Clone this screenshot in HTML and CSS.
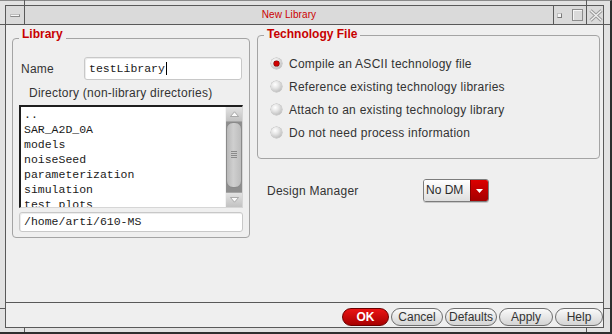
FILE: index.html
```html
<!DOCTYPE html>
<html>
<head>
<meta charset="utf-8">
<title>New Library</title>
<link rel="stylesheet" href="styles.css">
</head>
<body>
<div class="frame">
  <span class="tick tick-t1"></span>
  <span class="tick tick-t2"></span>
  <span class="tick tick-b1"></span>
  <span class="tick tick-b2"></span>
  <span class="tick tick-l1"></span>
  <span class="tick tick-l2"></span>
  <span class="tick tick-r1"></span>
  <span class="tick tick-r2"></span>
  <div class="win">
    <div class="titlebar">
      <div class="tb-menu"><span class="tb-dash"></span></div>
      <div class="tb-title">New Library</div>
      <div class="tb-ctrls">
        <span class="tb-min"></span>
        <span class="tb-max"></span>
      </div>
      <div class="tb-close">
        <svg width="14" height="13" viewBox="0 0 14 13">
          <path d="M1.5 1.5 L12.5 11.5 M12.5 1.5 L1.5 11.5" stroke="#9a9a9a" stroke-width="3.2" fill="none"/>
          <path d="M1.5 1.5 L12.5 11.5 M12.5 1.5 L1.5 11.5" stroke="#f2f2f2" stroke-width="1.2" fill="none"/>
        </svg>
      </div>
    </div>

    <div class="content">
      <div class="group lib">
        <div class="group-title">Library</div>
        <div class="name-row">
          <span class="lbl name-lbl">Name</span>
          <div class="field name-field">testLibrary<span class="caret"></span></div>
        </div>
        <div class="lbl dir-lbl">Directory (non-library directories)</div>
        <div class="listbox">
          <ul class="items">
            <li>..</li>
            <li>SAR_A2D_0A</li>
            <li>models</li>
            <li>noiseSeed</li>
            <li>parameterization</li>
            <li>simulation</li>
            <li>test_plots</li>
          </ul>
          <div class="scrollbar">
            <div class="sb-btn">
              <svg width="9" height="6" viewBox="0 0 9 6"><path d="M0.5 5.5 L4.5 0.8 L8.5 5.5 Z" fill="#fafafa" stroke="#9a9a9a" stroke-width="0.8"/></svg>
            </div>
            <div class="sb-track">
              <div class="sb-thumb"><span class="grip"></span></div>
            </div>
            <div class="sb-btn">
              <svg width="9" height="6" viewBox="0 0 9 6"><path d="M0.5 0.5 L4.5 5.2 L8.5 0.5 Z" fill="#fafafa" stroke="#9a9a9a" stroke-width="0.8"/></svg>
            </div>
          </div>
        </div>
        <div class="field path-field">/home/arti/610-MS</div>
      </div>

      <div class="right">
        <div class="group tech">
          <div class="group-title">Technology File</div>
          <div class="radios">
            <div class="radio-row"><span class="radio on"></span>Compile an ASCII technology file</div>
            <div class="radio-row"><span class="radio"></span>Reference existing technology libraries</div>
            <div class="radio-row"><span class="radio"></span>Attach to an existing technology library</div>
            <div class="radio-row"><span class="radio"></span>Do not need process information</div>
          </div>
        </div>
        <div class="dm-row">
          <span class="lbl dm-lbl">Design Manager</span>
          <div class="select">
            <span class="sel-text">No DM</span>
            <span class="sel-btn"><svg width="7" height="4" viewBox="0 0 7 4"><path d="M0 0 L7 0 L3.5 4 Z" fill="#ffffff"/></svg></span>
          </div>
        </div>
      </div>
    </div>

    <div class="buttons">
      <button class="btn ok">OK</button>
      <button class="btn w-cancel">Cancel</button>
      <button class="btn w-defaults">Defaults</button>
      <button class="btn w-apply">Apply</button>
      <button class="btn w-help">Help</button>
    </div>
  </div>
</div>
</body>
</html>
```

FILE: styles.css
```css
* { box-sizing: border-box; }

html, body {
  margin: 0;
  padding: 0;
}

body {
  width: 612px;
  height: 334px;
  overflow: hidden;
  background: #e2e2e2;
  font-family: "Liberation Sans", Arial, sans-serif;
  font-size: 12px;
  color: #333333;
}

/* outer window frame */
.frame {
  position: relative;
  width: 612px;
  height: 334px;
  background: #e2e2e2;
  border-top: 1px solid #8a8a8a;
  border-right: 2px solid #2e2e2e;
  border-bottom: 2px solid #2e2e2e;
  padding: 4px 6px 4px 5px;
}

.tick {
  position: absolute;
  background: #5a5a5a;
}
.tick-t1 { left: 24px; top: -1px; width: 1px; height: 5px; }
.tick-t2 { left: 586px; top: -1px; width: 1px; height: 5px; }
.tick-b1 { left: 24px; bottom: 0; width: 1px; height: 4px; }
.tick-b2 { left: 586px; bottom: 0; width: 1px; height: 4px; }
.tick-l1 { left: 0; top: 23px; width: 5px; height: 1px; }
.tick-l2 { left: 0; top: 307px; width: 5px; height: 1px; }
.tick-r1 { right: 0; top: 23px; width: 6px; height: 1px; }
.tick-r2 { right: 0; top: 307px; width: 6px; height: 1px; }

.win {
  height: 100%;
  display: flex;
  flex-direction: column;
  border: 1px solid #595959;
  background: #efefef;
}

/* title bar */
.titlebar {
  display: flex;
  height: 19px;
  flex: none;
  border-bottom: 1px solid #595959;
  background: #dadada;
}

.tb-menu {
  width: 19px;
  border-right: 1px solid #595959;
  display: flex;
  align-items: center;
  justify-content: center;
}

.tb-dash {
  width: 10px;
  height: 3px;
  background: #f6f6f6;
  border: 1px solid #8a8a8a;
  border-top-color: #bdbdbd;
  border-left-color: #bdbdbd;
}

.tb-title {
  flex: 1;
  text-align: center;
  color: #cc0000;
  font-size: 10px;
  letter-spacing: 0.1px;
  line-height: 18px;
}

.tb-ctrls {
  width: 34px;
  border-left: 1px solid #595959;
  border-right: 1px solid #595959;
  display: flex;
  align-items: center;
  padding-left: 3px;
}

.tb-min {
  width: 5px;
  height: 5px;
  background: #f4f4f4;
  border: 1px solid #7a7a7a;
  border-top-color: #c0c0c0;
  border-left-color: #c0c0c0;
}

.tb-max {
  width: 11px;
  height: 12px;
  margin-left: 10px;
  border: 1px solid #8c8c8c;
  box-shadow: inset 1px 1px #f6f6f6;
}

.tb-close {
  width: 16px;
  display: flex;
  align-items: center;
  padding-left: 2px;
}
.tb-close svg { display: block; }

/* main content */
.content {
  flex: 1;
  display: flex;
  align-items: flex-start;
  gap: 7px;
  padding: 0 3px 0 6px;
}

.group {
  border: 1px solid #a4a4a4;
  border-radius: 4px;
}

.group-title {
  width: max-content;
  padding: 0 3px;
  background: #efefef;
  color: #c80000;
  font-weight: bold;
  font-size: 12px;
  line-height: 14px;
}

.lbl {
  letter-spacing: 0.25px;
  line-height: 14px;
  color: #333333;
}

/* library group */
.lib {
  width: 238px;
  height: 200px;
  margin-top: 13px;
}
.lib .group-title { margin: -12px 0 0 6px; }

.name-row {
  display: flex;
  align-items: center;
  margin-top: 16px;
  padding-left: 8px;
}

.name-lbl { width: 63px; }

.field {
  background: #ffffff;
  border: 1px solid #c8c8c8;
  border-radius: 3px;
  box-shadow: inset 1px 1px #ececec;
  font-family: "Liberation Mono", "Courier New", monospace;
  font-size: 11.5px;
  color: #1a1a1a;
  white-space: nowrap;
}

.name-field {
  width: 158px;
  height: 23px;
  padding-left: 4px;
  line-height: 21px;
}

.caret {
  display: inline-block;
  width: 1px;
  height: 13px;
  background: #000000;
  vertical-align: -3px;
  margin-left: 1px;
}

.dir-lbl { margin: 6px 0 0 16px; }

.listbox {
  display: flex;
  height: 103px;
  margin: 5px 6px 0;
  background: #ffffff;
  border-style: solid;
  border-width: 2px 1px 1px 2px;
  border-color: #1e1e1e #d6d6d6 #d6d6d6 #1e1e1e;
}

.items {
  flex: 1;
  margin: 0;
  padding: 0 0 0 3px;
  list-style: none;
  overflow: hidden;
  font-family: "Liberation Mono", "Courier New", monospace;
  font-size: 11.5px;
  line-height: 15px;
  color: #1a1a1a;
}

.scrollbar {
  width: 17px;
  display: flex;
  flex-direction: column;
  background: #e4e4e4;
  border-left: 1px solid #f4f4f4;
}

.sb-btn {
  height: 15px;
  display: flex;
  align-items: center;
  justify-content: center;
  background: linear-gradient(#e2e2e2, #c2c2c2);
  border-bottom: 1px solid #a6a6a6;
}
.sb-btn:last-child {
  border-bottom: none;
  border-top: 1px solid #a6a6a6;
}
.sb-btn svg { display: block; }

.sb-track {
  flex: 1;
  background: #8e8e8e;
  padding-bottom: 4px;
  display: flex;
}

.sb-thumb {
  flex: 1;
  display: flex;
  align-items: center;
  justify-content: center;
  background: linear-gradient(90deg, #b8b8b8, #cfcfcf 45%, #bdbdbd);
  border: 1px solid #8a8a8a;
  border-radius: 7px;
}

.grip {
  width: 6px;
  height: 8px;
  background: repeating-linear-gradient(#8a8a8a 0 1px, transparent 1px 2px);
}

.path-field {
  height: 20px;
  margin: 4px 6px 0;
  padding-left: 4px;
  line-height: 18px;
}

/* right column */
.right {
  width: 343px;
  display: flex;
  flex-direction: column;
}

.tech {
  height: 124px;
  margin-top: 10px;
}
.tech .group-title { margin: -9px 0 0 6px; }

.radios {
  margin-top: 11px;
  padding-left: 13px;
}

.radio-row {
  display: flex;
  align-items: center;
  gap: 7px;
  height: 23px;
  letter-spacing: 0.25px;
  color: #333333;
}

.radio {
  position: relative;
  width: 11px;
  height: 11px;
  border-radius: 50%;
  background: radial-gradient(circle at 38% 32%, #ffffff 0, #e6e6e6 35%, #bcbcbc 80%, #a8a8a8 100%);
  box-shadow: 0 0 0 0.5px #b4b4b4;
}

.radio.on::after {
  content: "";
  position: absolute;
  left: 3px;
  top: 3px;
  width: 5px;
  height: 5px;
  border-radius: 50%;
  background: #d00000;
  box-shadow: 0 0 0 0.6px #700000;
}

.dm-row {
  display: flex;
  align-items: center;
  margin-top: 20px;
  padding-left: 10px;
}

.dm-lbl { width: 156px; }

.select {
  display: flex;
  width: 66px;
  height: 23px;
  border: 1px solid #7c7c7c;
  border-radius: 3px;
  overflow: hidden;
  box-shadow: 0 1px 0 #c8c8c8;
}

.sel-text {
  flex: 1;
  padding-left: 2px;
  line-height: 21px;
  background: linear-gradient(#ffffff, #dedede);
  color: #2a2a2a;
}

.sel-btn {
  width: 18px;
  display: flex;
  align-items: center;
  justify-content: center;
  background: linear-gradient(#dc0000, #a40000);
  border-left: 1px solid #8a0000;
}
.sel-btn svg { display: block; }

/* bottom button bar */
.buttons {
  flex: none;
  height: 25px;
  border-top: 1px solid #595959;
  display: flex;
  justify-content: flex-end;
  align-items: flex-start;
  gap: 2px;
  padding-top: 5px;
}

.btn {
  height: 18px;
  margin: 0;
  padding: 0;
  border: 1px solid #6e6e6e;
  border-radius: 9px;
  background: linear-gradient(#fafafa, #d4d4d4);
  font-family: "Liberation Sans", Arial, sans-serif;
  font-size: 12px;
  line-height: 16px;
  color: #333333;
  text-align: center;
}

.ok {
  width: 47px;
  background: linear-gradient(#ea1414, #a80000);
  border-color: #6a0000;
  color: #ffffff;
  font-weight: bold;
}
.w-cancel { width: 52px; }
.w-defaults { width: 52px; }
.w-apply { width: 54px; }
.w-help { width: 48px; }
```
